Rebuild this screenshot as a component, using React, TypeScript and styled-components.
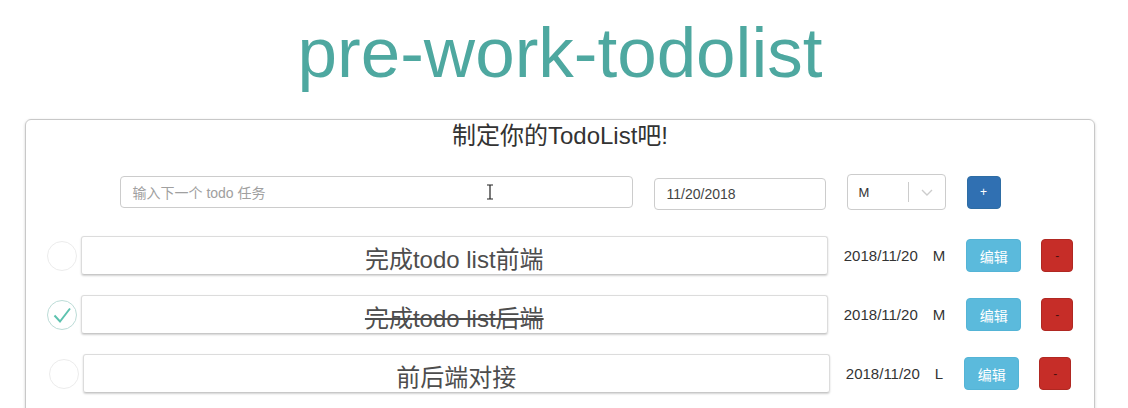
import React from 'react';
import styled, { createGlobalStyle, css } from 'styled-components';

const GlobalStyle = createGlobalStyle`
  html, body {
    margin: 0;
    padding: 0;
    background: #fff;
  }
  body {
    font-family: "Liberation Sans", "Noto Sans CJK SC", sans-serif;
    color: #333;
    overflow: hidden;
  }
  * {
    box-sizing: border-box;
  }
`;

interface Todo {
  text: string;
  date: string;
  priority: string;
  done: boolean;
}

const todos: Todo[] = [
  { text: '完成todo list前端', date: '2018/11/20', priority: 'M', done: false },
  { text: '完成todo list后端', date: '2018/11/20', priority: 'M', done: true },
  { text: '前后端对接', date: '2018/11/20', priority: 'L', done: false },
];

const Page = styled.div`
  width: 1120px;
`;

const Title = styled.h1`
  margin: 17px 0 0;
  height: 71px;
  line-height: 71px;
  font-size: 71px;
  font-weight: 400;
  text-align: center;
  color: #4ea8a0;
`;

const Card = styled.section`
  margin: 31px 25px 0;
  padding: 2px 0 40px;
  border: 1px solid #c8c8c8;
  border-radius: 6px;
  box-shadow: 0 1px 3px rgba(0, 0, 0, 0.18);
`;

const CardHeading = styled.h2`
  margin: 0;
  line-height: 28px;
  font-size: 24px;
  font-weight: 400;
  text-align: center;
  color: #333;
`;

const Form = styled.div`
  margin-top: 24px;
  height: 36px;
  display: flex;
  align-items: center;
  justify-content: center;
  gap: 21px;
`;

const TextField = styled.div<{ width: number; height: number; offset?: number }>`
  position: relative;
  width: ${p => p.width}px;
  height: ${p => p.height}px;
  margin-top: ${p => p.offset || 0}px;
  padding: 0 12px;
  display: flex;
  align-items: center;
  border: 1px solid #ccc;
  border-radius: 4px;
  font-size: 14px;
  color: #444;
`;

const Placeholder = styled.span`
  font-size: 14px;
  color: #a0a0a0;
`;

const Cursor = styled.svg`
  position: absolute;
  left: 365px;
  top: 7px;
`;

const Select = styled.div`
  width: 99px;
  height: 36px;
  display: flex;
  align-items: center;
  border: 1px solid #ccc;
  border-radius: 4px;
`;

const SelectValue = styled.span`
  flex: 1;
  padding-left: 11px;
  font-size: 13px;
  color: #333;
`;

const SelectSep = styled.span`
  width: 1px;
  height: 20px;
  background: #ccc;
`;

const SelectArrow = styled.span`
  width: 36px;
  display: flex;
  justify-content: center;
  color: #ccc;
`;

const Button = styled.button<{ kind: 'primary' | 'info' | 'danger'; w: number }>`
  width: ${p => p.w}px;
  height: 33px;
  padding: 0;
  border-radius: 4px;
  font-family: inherit;
  font-size: 14px;
  cursor: pointer;
  ${p => p.kind === 'primary' && css`
    background: #3070b2;
    border: 1px solid #2e6da4;
    color: #fff;
    font-size: 12px;
  `}
  ${p => p.kind === 'info' && css`
    background: #5bbadc;
    border: 1px solid #54b4d6;
    color: #fff;
  `}
  ${p => p.kind === 'danger' && css`
    background: #c62d28;
    border: 1px solid #b02822;
    color: #4a1210;
    font-size: 12px;
  `}
`;

const List = styled.ul`
  list-style: none;
  margin: 26px 0 0;
  padding: 0;
  display: flex;
  flex-direction: column;
  gap: 20px;
`;

const Row = styled.li`
  height: 39px;
  display: flex;
  align-items: center;
  justify-content: center;
`;

const Check = styled.span<{ done: boolean }>`
  width: 30px;
  height: 30px;
  margin-right: 4px;
  display: flex;
  align-items: center;
  justify-content: center;
  border: 1px solid ${p => (p.done ? '#bcdcd7' : '#ececec')};
  border-radius: 50%;
`;

const Label = styled.div<{ done: boolean }>`
  width: 747px;
  height: 39px;
  padding-top: 8px;
  text-align: center;
  line-height: 30px;
  font-size: 24px;
  color: #4d4d4d;
  border: 1px solid #dcdcdc;
  border-bottom-color: #c8c8c8;
  border-radius: 3px;
  box-shadow: 0 1px 2px rgba(0, 0, 0, 0.18);
  text-decoration: ${p => (p.done ? 'line-through' : 'none')};
`;

const DateText = styled.span`
  margin-left: 16px;
  font-size: 15px;
  color: #333;
`;

const Priority = styled.span`
  margin: 0 21px 0 15px;
  font-size: 15px;
  color: #333;
`;

const Actions = styled.div`
  display: flex;
  gap: 20px;
`;

const CheckMark = () => (
  <svg width="24" height="24" viewBox="0 0 24 24">
    <path d="M4.5 12.5 L10 18.5 L20 5.5" fill="none" stroke="#5dc2af" strokeWidth="2" />
  </svg>
);

const Chevron = () => (
  <svg width="14" height="14" viewBox="0 0 14 14">
    <path d="M2 5 L7 10 L12 5" fill="none" stroke="currentColor" strokeWidth="1.4" />
  </svg>
);

export default function App() {
  return (
    <Page>
      <GlobalStyle />
      <Title>pre-work-todolist</Title>
      <Card>
        <CardHeading>制定你的TodoList吧!</CardHeading>
        <Form>
          <TextField width={513} height={32}>
            <Placeholder>输入下一个 todo 任务</Placeholder>
            <Cursor width="8" height="16" viewBox="0 0 8 16">
              <path d="M1 1 H7 M4 1 V15 M1 15 H7" stroke="#222" strokeWidth="1.2" fill="none" />
            </Cursor>
          </TextField>
          <TextField width={172} height={32} offset={4}>11/20/2018</TextField>
          <Select>
            <SelectValue>M</SelectValue>
            <SelectSep />
            <SelectArrow>
              <Chevron />
            </SelectArrow>
          </Select>
          <Button kind="primary" w={34}>+</Button>
        </Form>
        <List>
          {todos.map((todo, i) => (
            <Row key={i}>
              <Check done={todo.done}>{todo.done && <CheckMark />}</Check>
              <Label done={todo.done}>{todo.text}</Label>
              <DateText>{todo.date}</DateText>
              <Priority>{todo.priority}</Priority>
              <Actions>
                <Button kind="info" w={55}>编辑</Button>
                <Button kind="danger" w={32}>-</Button>
              </Actions>
            </Row>
          ))}
        </List>
      </Card>
    </Page>
  );
}
